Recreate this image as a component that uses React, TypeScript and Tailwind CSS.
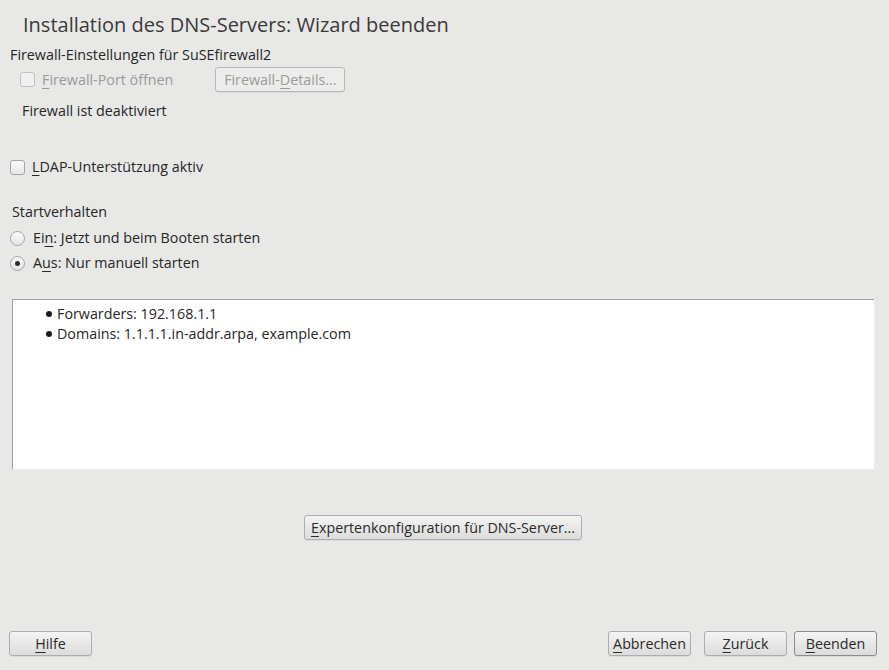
import React from "react";

const U = ({ c }: { c: string }) => <span className="underline underline-offset-[3px] decoration-1">{c}</span>;

function Btn({ children, x, w, def, disabled }: { children: React.ReactNode; x?: string; w: string; def?: boolean; disabled?: boolean }) {
  return (
    <div
      className={`${w} h-[25px] flex items-center justify-center rounded-[3px] border ${
        def ? "border-[#8c8c8c]" : disabled ? "border-[#b8b8b8]" : "border-[#adadad]"
      } ${disabled ? "bg-[#ececeb] text-[#9a9a9a]" : "bg-gradient-to-b from-[#f4f4f4] to-[#dcdcdb] text-[#2b2b2b]"} shadow-[0_1px_0_rgba(0,0,0,0.06)] ${x ?? ""}`}
    >
      {children}
    </div>
  );
}

function Check({ disabled }: { disabled?: boolean }) {
  return (
    <div
      className={`w-[15px] h-[15px] rounded-[3px] border ${
        disabled ? "border-[#c0c0c0] bg-[#f0f0f0]" : "border-[#a4a4a4] bg-gradient-to-b from-[#fbfbfb] to-[#e6e6e6]"
      }`}
    />
  );
}

function Radio({ checked }: { checked?: boolean }) {
  return (
    <div className="w-[15px] h-[15px] rounded-full border border-[#a4a4a4] bg-gradient-to-b from-[#fbfbfb] to-[#e4e4e4] flex items-center justify-center">
      {checked && <div className="w-[5px] h-[5px] rounded-full bg-[#2b2b2b]" />}
    </div>
  );
}

export default function App() {
  return (
    <div
      className="w-[889px] h-[670px] bg-[#e8e8e7] flex flex-col text-[14.3px] leading-[20px] text-[#262626] overflow-hidden"
      style={{ fontFamily: '"Open Sans", "Noto Sans", sans-serif' }}
    >
      <div className="pl-[23px] pt-[11px] text-[20px] leading-[28px] text-[#3a3a3a]">
        Installation des DNS-Servers: Wizard beenden
      </div>

      <div className="mt-[6px] pl-[10px]">Firewall-Einstellungen für SuSEfirewall2</div>

      <div className="mt-[2px] flex items-center h-[25px]">
        <div className="ml-[20px]">
          <Check disabled />
        </div>
        <div className="ml-[7px] text-[#9a9a9a]">
          <U c="F" />irewall-Port öffnen
        </div>
        <Btn x="ml-[42px]" w="w-[130px]" disabled>
          <span>
            Firewall-<U c="D" />etails...
          </span>
        </Btn>
      </div>

      <div className="mt-[9px] pl-[22px]">Firewall ist deaktiviert</div>

      <div className="mt-[36px] flex items-center pl-[10px]">
        <Check />
        <div className="ml-[7px]">
          <U c="L" />DAP-Unterstützung aktiv
        </div>
      </div>

      <div className="mt-[25px] pl-[12px]">Startverhalten</div>

      <div className="mt-[6px] flex items-center pl-[10px]">
        <Radio />
        <div className="ml-[8px]">
          Ei<U c="n" />: Jetzt und beim Booten starten
        </div>
      </div>

      <div className="mt-[5px] flex items-center pl-[10px]">
        <Radio checked />
        <div className="ml-[8px]">
          A<U c="u" />s: Nur manuell starten
        </div>
      </div>

      <div className="mt-[26px] ml-[12px] w-[862px] h-[170px] bg-white border-l border-t border-[#a0a0a0] pt-[4px]">
        <ul className="pl-[33px]">
          <li className="flex items-center">
            <span className="w-[6px] h-[6px] rounded-full bg-[#1a1a1a] mr-[5px]" />
            Forwarders: 192.168.1.1
          </li>
          <li className="flex items-center">
            <span className="w-[6px] h-[6px] rounded-full bg-[#1a1a1a] mr-[5px]" />
            Domains: 1.1.1.1.in-addr.arpa, example.com
          </li>
        </ul>
      </div>

      <div className="mt-[46px] flex">
        <Btn x="ml-[304px]" w="w-[278px]">
          <span>
            <U c="E" />xpertenkonfiguration für DNS-Server...
          </span>
        </Btn>
      </div>

      <div className="mt-auto mb-[14px] flex">
        <Btn x="ml-[9px]" w="w-[83px]">
          <span>
            <U c="H" />ilfe
          </span>
        </Btn>
        <Btn x="ml-[516px]" w="w-[83px]">
          <span>
            <U c="A" />bbrechen
          </span>
        </Btn>
        <Btn x="ml-[13px]" w="w-[83px]">
          <span>
            <U c="Z" />urück
          </span>
        </Btn>
        <Btn x="ml-[7px]" w="w-[83px]" def>
          <span>
            <U c="B" />eenden
          </span>
        </Btn>
      </div>
    </div>
  );
}
